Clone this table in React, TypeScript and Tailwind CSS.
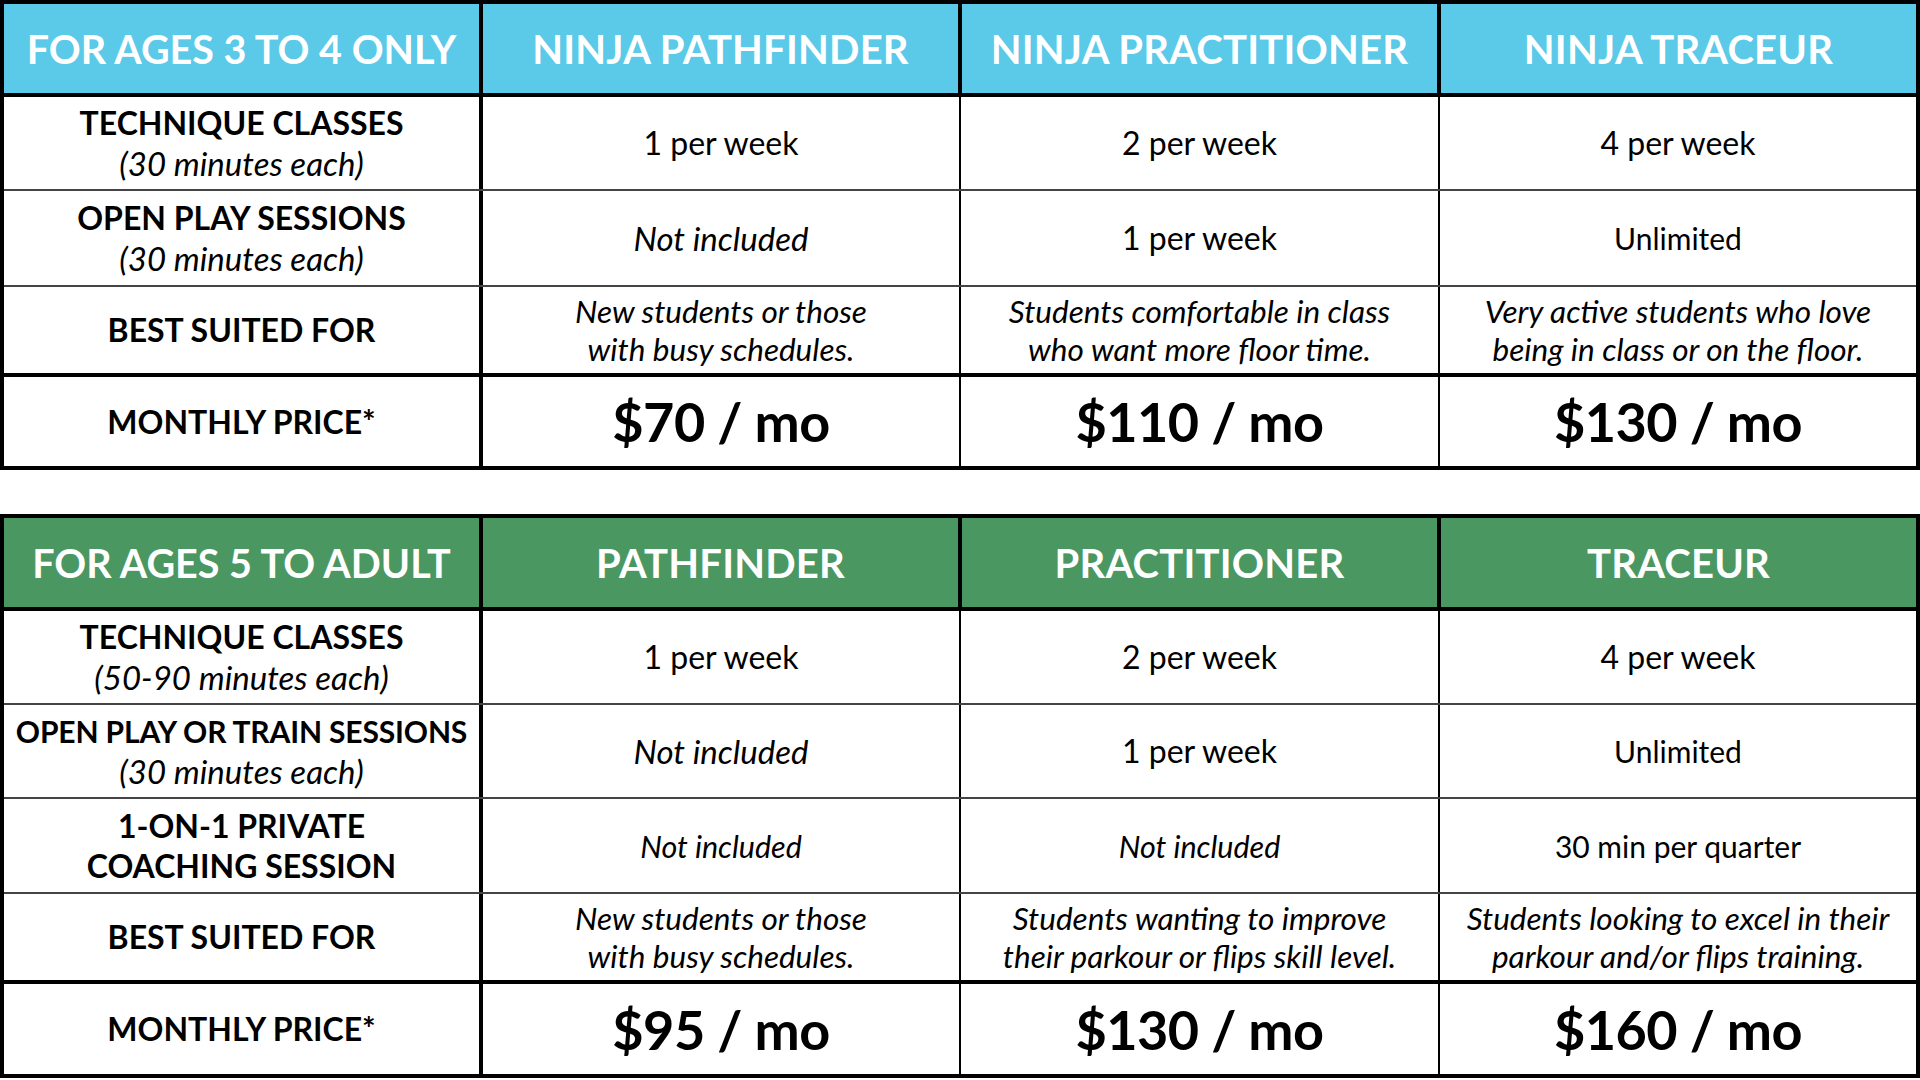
import React from 'react';

type Cell = { text: string[]; style: 'plain' | 'italic' | 'desc' | 'small' | 'smallItalic' };

interface PlanRow {
  label: string[];
  labelSize?: string;
  sub?: string;
  h: string;
  line: 'thin' | 'none';
  cells: Cell[];
}

interface PlanTable {
  headerBg: string;
  heads: string[];
  rows: PlanRow[];
  prices: string[];
  priceH: string;
}

const tables: PlanTable[] = [
  {
    headerBg: 'bg-[#5bc9e8]',
    heads: ['FOR AGES 3 TO 4 ONLY', 'NINJA PATHFINDER', 'NINJA PRACTITIONER', 'NINJA TRACEUR'],
    rows: [
      {
        label: ['TECHNIQUE CLASSES'],
        sub: '(30 minutes each)',
        h: 'h-[94px]',
        line: 'thin',
        cells: [
          { text: ['1 per week'], style: 'plain' },
          { text: ['2 per week'], style: 'plain' },
          { text: ['4 per week'], style: 'plain' },
        ],
      },
      {
        label: ['OPEN PLAY SESSIONS'],
        sub: '(30 minutes each)',
        h: 'h-[96px]',
        line: 'thin',
        cells: [
          { text: ['Not included'], style: 'italic' },
          { text: ['1 per week'], style: 'plain' },
          { text: ['Unlimited'], style: 'small' },
        ],
      },
      {
        label: ['BEST SUITED FOR'],
        h: 'h-[86px]',
        line: 'none',
        cells: [
          { text: ['New students or those', 'with busy schedules.'], style: 'desc' },
          { text: ['Students comfortable in class', 'who want more floor time.'], style: 'desc' },
          { text: ['Very active students who love', 'being in class or on the floor.'], style: 'desc' },
        ],
      },
    ],
    prices: ['$70 / mo', '$110 / mo', '$130 / mo'],
    priceH: 'h-[93px]',
  },
  {
    headerBg: 'bg-[#4a9762]',
    heads: ['FOR AGES 5 TO ADULT', 'PATHFINDER', 'PRACTITIONER', 'TRACEUR'],
    rows: [
      {
        label: ['TECHNIQUE CLASSES'],
        sub: '(50-90 minutes each)',
        h: 'h-[94px]',
        line: 'thin',
        cells: [
          { text: ['1 per week'], style: 'plain' },
          { text: ['2 per week'], style: 'plain' },
          { text: ['4 per week'], style: 'plain' },
        ],
      },
      {
        label: ['OPEN PLAY OR TRAIN SESSIONS'],
        labelSize: 'text-[30px] tracking-[-0.005em]',
        sub: '(30 minutes each)',
        h: 'h-[94px]',
        line: 'thin',
        cells: [
          { text: ['Not included'], style: 'italic' },
          { text: ['1 per week'], style: 'plain' },
          { text: ['Unlimited'], style: 'small' },
        ],
      },
      {
        label: ['1-ON-1 PRIVATE', 'COACHING SESSION'],
        h: 'h-[95px]',
        line: 'thin',
        cells: [
          { text: ['Not included'], style: 'smallItalic' },
          { text: ['Not included'], style: 'smallItalic' },
          { text: ['30 min per quarter'], style: 'small' },
        ],
      },
      {
        label: ['BEST SUITED FOR'],
        h: 'h-[86px]',
        line: 'none',
        cells: [
          { text: ['New students or those', 'with busy schedules.'], style: 'desc' },
          { text: ['Students wanting to improve', 'their parkour or flips skill level.'], style: 'desc' },
          { text: ['Students looking to excel in their', 'parkour and/or flips training.'], style: 'desc' },
        ],
      },
    ],
    prices: ['$95 / mo', '$130 / mo', '$160 / mo'],
    priceH: 'h-[94px]',
  },
];

// body column widths, label column carries the thick divider
const bodyCols = ['w-[478px] border-r-2 border-black', 'w-[479px] border-r-2 border-black', 'flex-1'];
const headCols = ['w-[479px] border-r-4 border-black', 'w-[479px] border-r-4 border-black', 'flex-1'];

const cellText: Record<Cell['style'], string> = {
  plain: 'text-[32px] leading-[40px]',
  italic: 'text-[33px] leading-[40px] italic',
  small: 'text-[30px] leading-[40px]',
  smallItalic: 'text-[30.5px] leading-[40px] italic',
  desc: 'text-[31.5px] leading-[38px] italic',
};

function Table({ t }: { t: PlanTable }) {
  return (
    <div className="w-[1920px] border-4 border-black">
      <div className={`flex h-[93px] border-b-4 border-black ${t.headerBg}`}>
        <div className="flex w-[479px] items-center justify-center border-r-4 border-black">
          <span className="text-[39.5px] font-bold text-white">{t.heads[0]}</span>
        </div>
        {t.heads.slice(1).map((h, i) => (
          <div key={h} className={`flex items-center justify-center ${headCols[i]}`}>
            <span className="text-[40px] font-bold tracking-[0.005em] text-white">{h}</span>
          </div>
        ))}
      </div>

      {t.rows.map((r, ri) => (
        <div
          key={ri}
          className={`flex ${r.h} ${r.line === 'thin' ? 'border-b-2 border-[#444]' : ''}`}
        >
          <div className="flex w-[479px] flex-col items-center justify-center border-r-4 border-black text-center">
            {r.label.map((l) => (
              <div
                key={l}
                className={`whitespace-nowrap font-bold leading-[40px] text-black ${r.labelSize ?? 'text-[32px]'}`}
              >
                {l}
              </div>
            ))}
            {r.sub && <div className="text-[33px] italic leading-[40px] text-black">{r.sub}</div>}
          </div>
          {r.cells.map((c, ci) => (
            <div
              key={ci}
              className={`flex flex-col items-center justify-center text-center text-black ${bodyCols[ci]}`}
            >
              {c.text.map((line) => (
                <div key={line} className={`whitespace-nowrap ${cellText[c.style]}`}>
                  {line}
                </div>
              ))}
            </div>
          ))}
        </div>
      ))}

      <div className={`flex ${t.priceH} border-t-4 border-black`}>
        <div className="flex w-[479px] items-center justify-center border-r-4 border-black">
          <span className="text-[32px] font-bold text-black">MONTHLY PRICE*</span>
        </div>
        {t.prices.map((p, pi) => (
          <div key={p} className={`flex items-center justify-center ${bodyCols[pi]}`}>
            <span className="text-[54px] font-bold tracking-[-0.01em] text-black">{p}</span>
          </div>
        ))}
      </div>
    </div>
  );
}

export default function App() {
  return (
    <div className="flex h-[1080px] w-[1920px] flex-col gap-[44px] overflow-hidden bg-white font-['Lato',sans-serif]">
      {tables.map((t) => (
        <Table key={t.heads[0]} t={t} />
      ))}
    </div>
  );
}
